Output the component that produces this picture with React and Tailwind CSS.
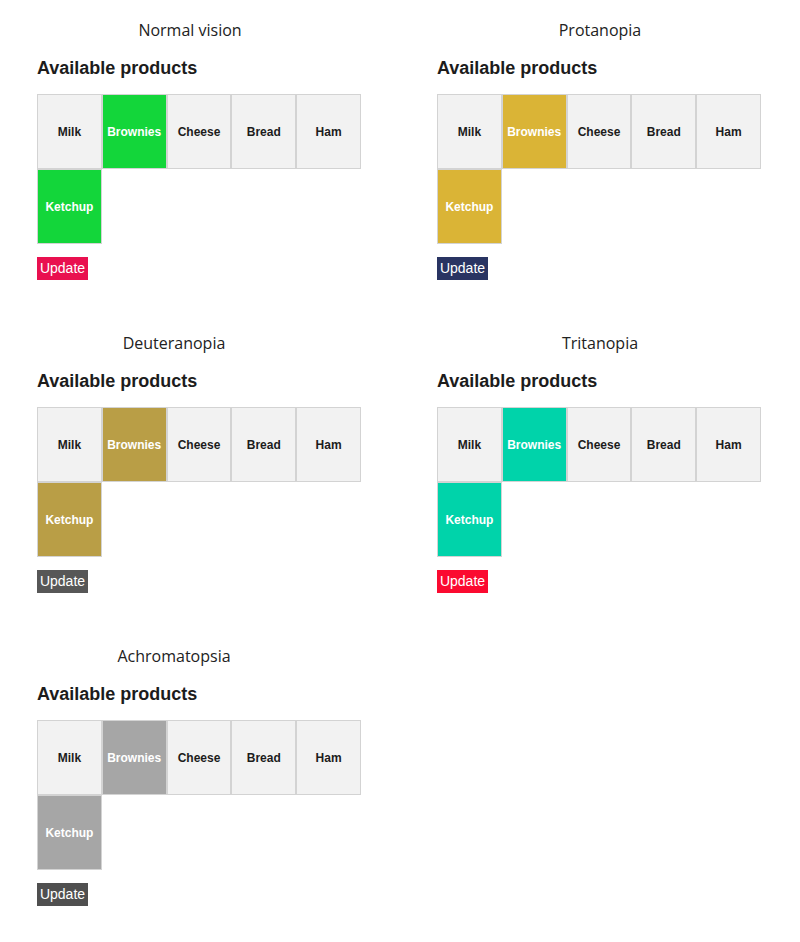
const products = ['Milk', 'Brownies', 'Cheese', 'Bread', 'Ham', 'Ketchup']
const selected = ['Brownies', 'Ketchup']

const panels = [
  { title: 'Normal vision', titleW: 'w-[380px]', pad: 'pl-[37px]', tile: 'bg-[#13d63a]', button: 'bg-[#e9104f]' },
  { title: 'Protanopia', titleW: 'w-[400px]', pad: 'pl-[37px]', tile: 'bg-[#dab436]', button: 'bg-[#293462]' },
  { title: 'Deuteranopia', titleW: 'w-[348px]', pad: 'pl-[37px]', tile: 'bg-[#b99e46]', button: 'bg-[#575757]' },
  { title: 'Tritanopia', titleW: 'w-[400px]', pad: 'pl-[37px]', tile: 'bg-[#00d3aa]', button: 'bg-[#fb0a30]' },
  { title: 'Achromatopsia', titleW: 'w-[348px]', pad: 'pl-[37px]', tile: 'bg-[#a6a6a6]', button: 'bg-[#4f4f4f]' },
]

function Panel({ title, titleW, pad, tile, button }) {
  return (
    <div className="h-[313px]">
      <div className={`${titleW} text-center text-[16px] leading-[22px] text-[#222] font-['Open_Sans',sans-serif]`}>
        {title}
      </div>
      <div className={pad}>
        <h2 className="mt-[17px] text-[18px] leading-[21px] font-bold text-[#1c1c1c] font-['Liberation_Sans',Arial,sans-serif]">
          Available products
        </h2>
        <div className="mt-[15px] w-[324px] flex flex-wrap">
          {products.map((p) => {
            const on = selected.includes(p)
            return (
              <div
                key={p}
                className={`w-1/5 h-[75px] flex items-center justify-center border border-[#d3d3d3] text-[12px] font-bold font-['Liberation_Sans',Arial,sans-serif] ${
                  on ? `${tile} text-white` : 'bg-[#f2f2f2] text-[#1c1c1c]'
                }`}
              >
                {p}
              </div>
            )
          })}
        </div>
        <button
          className={`mt-[13px] w-[51px] h-[23px] flex items-center justify-center text-[14px] text-white font-['Liberation_Sans',Arial,sans-serif] ${button}`}
        >
          Update
        </button>
      </div>
    </div>
  )
}

export default function App() {
  return (
    <div className="w-[800px] min-h-[942px] bg-white pt-[19px]">
      <div className="grid grid-cols-[400px_400px]">
        {panels.map((p) => (
          <Panel key={p.title} {...p} />
        ))}
      </div>
    </div>
  )
}
